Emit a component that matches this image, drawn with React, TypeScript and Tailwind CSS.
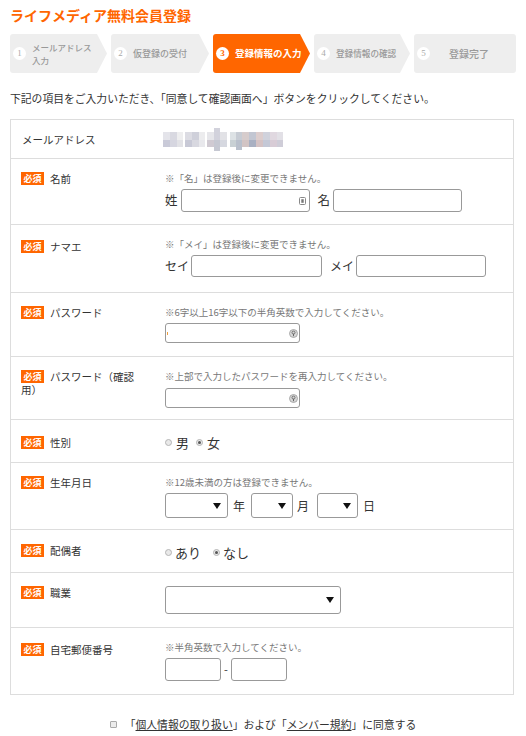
import React from 'react';

const steps = [
  { n: '1', lines: ['メールアドレス', '入力'], size: 'text-[8.5px]', w: 'w-[97px]' },
  { n: '2', lines: ['仮登録の受付'], size: 'text-[9px]', w: 'w-[98px]' },
  { n: '3', lines: ['登録情報の入力'], size: 'text-[9.5px]', w: 'w-[97px]', active: true },
  { n: '4', lines: ['登録情報の確認'], size: 'text-[8.6px]', w: 'w-[96px]' },
];

const Badge = () => (
  <span className="mr-[6px] inline-flex h-[13px] w-[23px] items-center justify-center bg-[#ff6600] align-top text-[9px] font-bold leading-none text-white">
    必須
  </span>
);

const Arrow = () => (
  <svg width="8" height="6" viewBox="0 0 8 6" className="shrink-0">
    <polygon points="0,0 8,0 4,6" fill="#111" />
  </svg>
);

const Radio = ({ checked }: { checked?: boolean }) => (
  <span className="flex h-[7px] w-[7px] shrink-0 items-center justify-center rounded-full border border-[#b5b5b5] bg-[#e9e9e9]">
    {checked && <span className="h-[3px] w-[3px] rounded-full bg-[#555]" />}
  </span>
);

const CardIcon = () => (
  <svg width="7" height="8" viewBox="0 0 7 8" className="shrink-0">
    <rect x="0.5" y="0.5" width="6" height="7" rx="1" fill="#fff" stroke="#888" />
    <rect x="2.3" y="2.2" width="2.4" height="3.6" fill="#777" />
  </svg>
);

const KeyIcon = () => (
  <svg width="9" height="9" viewBox="0 0 9 9" className="shrink-0">
    <circle cx="4.5" cy="4.5" r="4" fill="#d8d8d8" stroke="#9a9a9a" strokeWidth="0.8" />
    <circle cx="4.5" cy="3.6" r="1.5" fill="none" stroke="#666" strokeWidth="0.9" />
    <rect x="4" y="4.8" width="1" height="2.4" fill="#666" />
  </svg>
);

const Note = ({ children }: { children: React.ReactNode }) => (
  <div className="text-[9.5px] leading-[12px] text-[#777]">{children}</div>
);

function Row({
  h,
  label,
  required = true,
  children,
  last,
  labelPt = 'pt-[13px]',
  contentPt = 'pt-[13px]',
}: {
  h: string;
  label: React.ReactNode;
  required?: boolean;
  children: React.ReactNode;
  last?: boolean;
  labelPt?: string;
  contentPt?: string;
}) {
  return (
    <div className={`flex ${h} ${last ? '' : 'border-b border-[#dddddd]'}`}>
      <div className={`w-[154px] shrink-0 pl-[10px] pr-[26px] ${labelPt} text-[10.5px] leading-[13px] text-[#333]`}>
        {required && <Badge />}
        {label}
      </div>
      <div className={`flex-1 ${contentPt}`}>{children}</div>
    </div>
  );
}

const mosaic: [number, number, number, number, string][] = [
  [0, 0, 7, 8, '#e4e4ea'], [7, 0, 7, 8, '#d9d9e1'], [14, 0, 6, 8, '#eeeeef'], [22, 0, 7, 8, '#dcdce3'],
  [29, 0, 7, 8, '#cfd0da'], [36, 0, 6, 8, '#ececee'], [44, 0, 7, 8, '#e6e6ea'],
  [51, -4, 6, 12, '#d2d2dc'], [57, 0, 7, 8, '#e2e2e6'], [67, 0, 6, 8, '#dde2e5'],
  [73, 0, 6, 8, '#c7ccd4'], [79, 0, 7, 8, '#d6cccc'], [86, 0, 7, 8, '#c2c6d2'],
  [93, 0, 7, 8, '#dccdcd'], [100, 0, 7, 8, '#d0d2dc'], [107, 0, 7, 8, '#e0d8e0'], [114, 0, 6, 8, '#e2e0e6'],
  [0, 8, 7, 7, '#c9cad8'], [7, 8, 7, 7, '#d6d6e0'], [14, 8, 6, 7, '#e2e2e6'], [22, 8, 7, 7, '#c8c9d6'],
  [29, 8, 7, 7, '#d8d8e0'], [36, 8, 6, 7, '#e8e8ec'], [44, 8, 7, 7, '#d0cad2'],
  [51, 8, 6, 11, '#c6c8d2'], [57, 8, 7, 7, '#d6d8e0'], [67, 8, 6, 7, '#c8d0d4'],
  [73, 8, 6, 10, '#b9c0cc'], [79, 8, 7, 7, '#d2c4c4'], [86, 8, 7, 7, '#a9b0c2'],
  [93, 8, 7, 7, '#d4c2c4'], [100, 8, 7, 7, '#c4c8d6'], [107, 8, 7, 7, '#d8ccd6'], [114, 8, 6, 7, '#cfcdd8'],
];

export default function App() {
  return (
    <div className="w-[526px] bg-white px-[10px] font-['Noto_Sans_CJK_JP',sans-serif] text-[#333]">
      <div className="flex h-[29px] items-center text-[14px] font-bold leading-none text-[#ff6600]">
        ライフメディア無料会員登録
      </div>

      <div className="mt-[5px] flex h-[39px] gap-[4px]">
        {steps.map((s) => (
          <div
            key={s.n}
            className={`flex ${s.w} shrink-0 items-center rounded-l-[3px] pl-[3px] [clip-path:polygon(0_0,calc(100%-10px)_0,100%_50%,calc(100%-10px)_100%,0_100%)] ${
              s.active ? 'bg-[#ff6600]' : 'bg-[#eeeeee]'
            }`}
          >
            <span
              className={`flex h-[13px] w-[13px] shrink-0 items-center justify-center rounded-full bg-white font-['Liberation_Serif',serif] text-[9px] leading-none ${
                s.active ? 'font-bold text-[#ff6600]' : 'text-[#aaaaaa]'
              }`}
            >
              {s.n}
            </span>
            <span
              className={`ml-[6px] ${s.size} leading-[13px] ${s.active ? 'font-bold text-white' : 'font-medium text-[#999999]'}`}
            >
              {s.lines.map((l, i) => (
                <span key={i} className="block whitespace-nowrap">
                  {l}
                </span>
              ))}
            </span>
          </div>
        ))}
        <div className="flex flex-1 items-center rounded-[3px] bg-[#eeeeee] pl-[3px]">
          <span className="flex h-[13px] w-[13px] shrink-0 items-center justify-center rounded-full bg-white font-['Liberation_Serif',serif] text-[9px] leading-none text-[#aaaaaa]">
            5
          </span>
          <span className="flex-1 pr-[8px] text-center text-[10px] font-medium leading-[13px] text-[#999999]">登録完了</span>
        </div>
      </div>

      <div className="mt-[15px] flex h-[20px] items-center whitespace-nowrap text-[10.8px] leading-none text-[#333]">
        下記の項目をご入力いただき、「同意して確認画面へ」ボタンをクリックしてください。
      </div>

      <div className="mt-[11px] w-[504px] border border-[#dddddd]">
        <div className="flex h-[39px] items-center border-b border-[#dddddd]">
          <div className="w-[154px] shrink-0 pl-[11px] text-[10.5px] leading-[13px] text-[#333]">メールアドレス</div>
          <svg width="122" height="24" viewBox="0 -5 122 24" className="-ml-[2px]">
            {mosaic.map(([x, y, w, h, c], i) => (
              <rect key={i} x={x} y={y} width={w} height={h} fill={c} />
            ))}
          </svg>
        </div>

        <Row h="h-[66px]" label="名前" labelPt="pt-[13px]">
          <Note>※「名」は登録後に変更できません。</Note>
          <div className="mt-[5px] flex items-center text-[12.5px] leading-none text-[#333]">
            <span>姓</span>
            <div className="ml-[3px] flex h-[23px] w-[129px] items-center justify-end rounded-[3px] border border-[#999] bg-white pr-[3px]">
              <CardIcon />
            </div>
            <span className="ml-[8px]">名</span>
            <div className="ml-[3px] h-[23px] w-[129px] rounded-[3px] border border-[#999] bg-white" />
          </div>
        </Row>

        <Row h="h-[68px]" label="ナマエ" labelPt="pt-[15px]">
          <Note>※「メイ」は登録後に変更できません。</Note>
          <div className="mt-[5px] flex items-center text-[12px] leading-none text-[#333]">
            <span>セイ</span>
            <div className="ml-[2px] h-[22px] w-[131px] rounded-[3px] border border-[#999] bg-white" />
            <span className="ml-[8px]">メイ</span>
            <div className="ml-[2px] h-[22px] w-[130px] rounded-[3px] border border-[#999] bg-white" />
          </div>
        </Row>

        <Row h="h-[64px]" label="パスワード">
          <Note>※6字以上16字以下の半角英数で入力してください。</Note>
          <div className="mt-[5px] flex h-[20px] w-[135px] items-center justify-between rounded-[3px] border border-[#999] bg-white pl-[1px] pr-[1px]">
            <span className="h-[3px] w-[1px] bg-[#f0a040]" />
            <KeyIcon />
          </div>
        </Row>

        <Row h="h-[63px]" label="パスワード（確認用）">
          <Note>※上部で入力したパスワードを再入力してください。</Note>
          <div className="mt-[6px] flex h-[20px] w-[135px] items-center justify-end rounded-[3px] border border-[#999] bg-white pr-[1px]">
            <KeyIcon />
          </div>
        </Row>

        <Row h="h-[43px]" label="性別" labelPt="pt-[16px]" contentPt="pt-[15px]">
          <div className="flex h-[14px] items-center text-[13px] leading-none text-[#333]">
            <Radio />
            <span className="ml-[4px]">男</span>
            <span className="ml-[7px]">
              <Radio checked />
            </span>
            <span className="ml-[4px]">女</span>
          </div>
        </Row>

        <Row h="h-[67px]" label="生年月日">
          <Note>※12歳未満の方は登録できません。</Note>
          <div className="mt-[5px] flex items-center text-[12px] leading-none text-[#333]">
            <div className="flex h-[25px] w-[63px] items-center justify-end rounded-[3px] border border-[#999] bg-white pr-[6px]">
              <Arrow />
            </div>
            <span className="ml-[5px]">年</span>
            <div className="ml-[6px] flex h-[25px] w-[42px] items-center justify-end rounded-[3px] border border-[#999] bg-white pr-[6px]">
              <Arrow />
            </div>
            <span className="ml-[4px]">月</span>
            <div className="ml-[8px] flex h-[25px] w-[41px] items-center justify-end rounded-[3px] border border-[#999] bg-white pr-[6px]">
              <Arrow />
            </div>
            <span className="ml-[5px]">日</span>
          </div>
        </Row>

        <Row h="h-[43px]" label="配偶者" labelPt="pt-[14px]" contentPt="pt-[15px]">
          <div className="flex h-[14px] items-center text-[13px] leading-none text-[#333]">
            <Radio />
            <span className="ml-[3px]">あり</span>
            <span className="ml-[12px]">
              <Radio checked />
            </span>
            <span className="ml-[3px]">なし</span>
          </div>
        </Row>

        <Row h="h-[55px]" label="職業">
          <div className="flex h-[28px] w-[176px] items-center justify-end rounded-[3px] border border-[#999] bg-white pr-[6px]">
            <Arrow />
          </div>
        </Row>

        <Row h="h-[66px]" label="自宅郵便番号" labelPt="pt-[15px]" last>
          <Note>※半角英数で入力してください。</Note>
          <div className="mt-[5px] flex items-center text-[11px] leading-none text-[#333]">
            <div className="h-[23px] w-[56px] rounded-[3px] border border-[#999] bg-white" />
            <span className="mx-[3px]">-</span>
            <div className="h-[23px] w-[56px] rounded-[3px] border border-[#999] bg-white" />
          </div>
        </Row>
      </div>

      <div className="mt-[22px] flex h-[14px] items-center justify-center text-[10.8px] leading-none text-[#333]">
        <span className="h-[7px] w-[7px] rounded-[1px] border border-[#aaa] bg-[#ececec]" />
        <span className="ml-[8px] whitespace-nowrap">
          「<span className="underline">個人情報の取り扱い</span>」および「
          <span className="underline">メンバー規約</span>」に同意する
        </span>
      </div>
      <div className="h-[20px]" />
    </div>
  );
}
